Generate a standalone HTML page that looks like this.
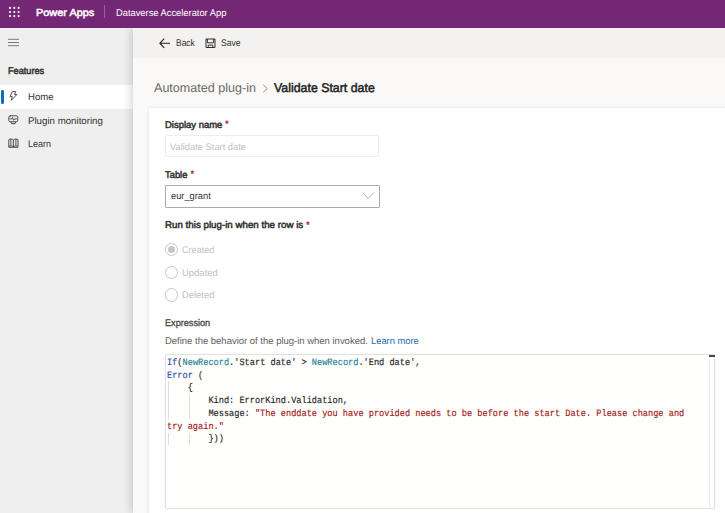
<!DOCTYPE html>
<html lang="en">
<head>
<meta charset="utf-8">
<title>Dataverse Accelerator App</title>
<style>
*{box-sizing:border-box;margin:0;padding:0}
html,body{text-rendering:geometricPrecision;width:725px;height:513px;overflow:hidden;background:#efefef;font-family:"Liberation Sans",sans-serif;color:#323130}
.abs{position:absolute}
.t{position:absolute;white-space:nowrap;line-height:1;transform-origin:0 50%}
.sb{-webkit-text-stroke:.5px currentColor}
.sl{-webkit-text-stroke:.3px currentColor}
.star{color:#a4262c;font-size:9.5px;-webkit-text-stroke:.25px #a4262c}
#hdr{left:0;top:0;width:725px;height:27.6px;background:#742774}
#main{left:132.7px;top:27.6px;width:593px;height:486px;background:#faf9f8;box-shadow:-1px 0 9px rgba(0,0,0,.2)}
#bar{left:132.7px;top:27.6px;width:593px;height:30px;background:#f3f2f1}
#card{left:148.6px;top:107.8px;width:580px;height:420px;background:#fff;border-radius:2px;box-shadow:0 0 3px rgba(0,0,0,.13)}
.radio{position:absolute;width:13.4px;height:13.4px;border:1px solid #c8c6c4;border-radius:50%;background:#fff}
.radio.on:after{content:"";position:absolute;left:2.2px;top:2.2px;width:7px;height:7px;border-radius:50%;background:#c8c6c4}
#ed{left:164.5px;top:353.8px;width:550.5px;height:155.2px;border:1px solid #e2e1e0;background:#fffffe;border-radius:2px;box-shadow:0 0 1px #dcdcdc}
#code{position:absolute;left:1.2px;top:2.35px;font-family:"Liberation Mono",monospace;font-size:9.7px;-webkit-text-stroke:.15px;line-height:12.67px;white-space:pre;color:#1e1e1e;transform-origin:0 0;transform:scaleX(.8897)}
.fn{color:#2f4f9f}.id{color:#267f99}.st{color:#a31515}
.g{position:absolute;width:1px;background:#dedede}
</style>
</head>
<body>

<!-- sidebar -->
<svg class="abs" style="left:8px;top:38px" width="12" height="9" viewBox="0 0 12 9" stroke="#7a7a7a" stroke-width="1"><path d="M0 1.3H11M0 4.5H11M0 7.7H11"/></svg>
<div class="abs" style="left:0;top:85px;width:132.7px;height:23.5px;background:#fff"></div>
<div class="abs" style="left:1.2px;top:89.6px;width:2.7px;height:14px;background:#0f6cbd;border-radius:1.3px"></div>
<svg class="abs" style="left:8.6px;top:91.4px" width="9" height="10" viewBox="0 0 9 10" fill="none" stroke="#3b3a39" stroke-width=".9" stroke-linejoin="round"><path d="M3.2 .6H6.6L5.5 3.5H7.9L2.3 9.3L3.3 5.6H1.1Z"/></svg>
<svg class="abs" style="left:8.2px;top:114.8px" width="11" height="10" viewBox="0 0 11 10" fill="none" stroke="#3b3a39" stroke-width=".9" stroke-linejoin="round" stroke-linecap="round"><rect x=".8" y=".8" width="9" height="6" rx="1.5"/><path d="M2 3.9H3.5L4.4 2.5L5.6 5.3L6.5 3.9H8.4"/><path d="M3 6.9L3.6 8.7H7L7.6 6.9"/></svg>
<svg class="abs" style="left:7.7px;top:137.9px" width="11" height="11" viewBox="0 0 11 11" fill="none" stroke="#3b3a39" stroke-width=".9" stroke-linejoin="round"><path d="M.8 1.7C2.2 .7 4.2 .8 5.4 1.8C6.6 .8 8.6 .7 10 1.7V9.3H.8ZM5.4 1.8V9.3M2.9 1.2V7.9M7.9 1.2V7.9"/><path d="M.8 8.1H10" stroke-width=".7"/></svg>

<div id="main" class="abs"></div>
<div id="bar" class="abs"></div>
<div id="hdr" class="abs">
  <svg class="abs" style="left:8px;top:6px" width="14" height="14" viewBox="0 0 14 14" fill="#fff">
    <circle cx="2" cy="1.9" r="1.05"/><circle cx="6.3" cy="1.9" r="1.05"/><circle cx="10.6" cy="1.9" r="1.05"/>
    <circle cx="2" cy="6" r="1.05"/><circle cx="6.3" cy="6" r="1.05"/><circle cx="10.6" cy="6" r="1.05"/>
    <circle cx="2" cy="10.1" r="1.05"/><circle cx="6.3" cy="10.1" r="1.05"/><circle cx="10.6" cy="10.1" r="1.05"/>
  </svg>
  <div class="abs" style="left:104px;top:4.8px;width:1px;height:13.2px;background:#99649a"></div>
</div>

<svg class="abs" style="left:159px;top:37.6px" width="12" height="11" viewBox="0 0 12 11" fill="none" stroke="#242424" stroke-width="1.15"><path d="M5.2 .6L.9 5.2L5.2 9.8M1 5.2H11"/></svg>
<svg class="abs" style="left:205.3px;top:37.5px" width="11" height="11" viewBox="0 0 11 11" fill="none" stroke="#323130" stroke-width="1"><path d="M1 1H10V9.5H1ZM2.4 1V4.8H8.6V1M3.2 9.5V7.1H7.8V9.5"/></svg>

<svg class="abs" style="left:262px;top:83.5px" width="7" height="10" viewBox="0 0 7 10" fill="none" stroke="#8a8886" stroke-width=".9"><path d="M1.2 .7L5.2 4.6L1.2 8.5"/></svg>

<div id="card" class="abs"></div>

<div class="abs" style="left:164.6px;top:135.4px;width:214px;height:21.6px;border:1px solid #efeeed;background:#fff;border-radius:2px"></div>
<div class="abs" style="left:165px;top:185px;width:215px;height:23px;border:1px solid #adabaa;background:#fff;border-radius:1px"></div>
<svg class="abs" style="left:362px;top:192.2px" width="13" height="8" viewBox="0 0 13 8" fill="none" stroke="#b3b1af" stroke-width="1"><path d="M.6 .7L6.2 6.5L11.8 .7"/></svg>

<div class="radio on" style="left:164.6px;top:242.8px"></div>
<div class="radio" style="left:164.6px;top:265.5px"></div>
<div class="radio" style="left:164.6px;top:288.4px"></div>

<div id="ed" class="abs">
<div class="g" style="left:2.9px;top:26.5px;height:38px"></div>
<div class="g" style="left:23.9px;top:39.2px;height:25.3px"></div>
<div class="g" style="left:2.9px;top:78px;height:12px"></div>
<div class="g" style="left:23.9px;top:78px;height:12px"></div>
<div id="code"><span class="fn">If</span>(<span class="id">NewRecord</span>.'Start date' &gt; <span class="id">NewRecord</span>.'End date',
<span class="fn">Error</span> (
    {
        Kind: ErrorKind.Validation,
        Message: <span class="st">"The enddate you have provided needs to be before the start Date. Please change and</span>
<span class="st">try again."</span>
        }))</div>
<div class="abs" style="right:0;top:0;width:5.4px;height:152.7px;border-left:1px solid #ebebeb"></div>
<div class="abs" style="right:-.6px;top:.2px;width:5.4px;height:1.6px;background:#4a4a4a"></div>
</div>
<span id="pa" class="t sb" style="left:36.20px;top:9.18px;font-size:10.3px;color:#fff;transform:scaleX(1.0609)">Power Apps</span>
<span id="dv" class="t" style="left:115.80px;top:8.69px;font-size:9.7px;color:#fff;transform:scaleX(0.9625)">Dataverse Accelerator App</span>
<span id="ft" class="t sb" style="left:8.00px;top:67.19px;font-size:9.7px;color:#323130;transform:scaleX(0.9468)">Features</span>
<span id="hm" class="t" style="left:28.10px;top:92.99px;font-size:9.7px;color:#323130;transform:scaleX(0.9867)">Home</span>
<span id="pm" class="t" style="left:28.10px;top:117.39px;font-size:9.7px;color:#323130;transform:scaleX(1.0005)">Plugin monitoring</span>
<span id="ln" class="t" style="left:28.10px;top:139.79px;font-size:9.7px;color:#323130;transform:scaleX(0.9241)">Learn</span>
<span id="bk" class="t" style="left:175.60px;top:39.19px;font-size:9.7px;color:#323130;transform:scaleX(0.8725)">Back</span>
<span id="sv" class="t" style="left:221.20px;top:39.19px;font-size:9.7px;color:#323130;transform:scaleX(0.8871)">Save</span>
<span id="ap" class="t" style="left:153.80px;top:81.73px;font-size:12.6px;color:#6b6967;transform:scaleX(0.9979)">Automated plug-in</span>
<span id="vs" class="t sb" style="left:274.10px;top:81.73px;font-size:12.6px;color:#242424;transform:scaleX(0.9816)">Validate Start date</span>
<span id="dn" class="t sb" style="left:164.70px;top:121.19px;font-size:9.7px;color:#323130;transform:scaleX(0.9761)">Display name</span>
<span id="ph" class="t" style="left:170.40px;top:142.76px;font-size:9.5px;color:#c2c0be;transform:scaleX(0.9810)">Validate Start date</span>
<span id="tb" class="t sb" style="left:164.60px;top:170.79px;font-size:9.7px;color:#323130;transform:scaleX(0.9667)">Table</span>
<span id="eg" class="t" style="left:171.20px;top:192.19px;font-size:9.7px;color:#323130;transform:scaleX(0.9594)">eur_grant</span>
<span id="rn" class="t sb" style="left:164.60px;top:221.39px;font-size:9.7px;color:#323130;transform:scaleX(1.0065)">Run this plug-in when the row is</span>
<span id="cr" class="t" style="left:182.00px;top:245.79px;font-size:9.7px;color:#c4c2c0;transform:scaleX(0.9400)">Created</span>
<span id="up" class="t" style="left:182.00px;top:269.39px;font-size:9.7px;color:#c4c2c0;transform:scaleX(0.9771)">Updated</span>
<span id="de" class="t" style="left:182.00px;top:291.19px;font-size:9.7px;color:#c4c2c0;transform:scaleX(0.9699)">Deleted</span>
<span id="ex" class="t sl" style="left:164.60px;top:319.19px;font-size:9.7px;color:#484644;transform:scaleX(0.9429)">Expression</span>
<span id="df" class="t" style="left:164.60px;top:336.79px;font-size:9.7px;color:#605e5c;transform:scaleX(0.9781)">Define the behavior of the plug-in when invoked.</span>
<span id="lm" class="t" style="left:370.60px;top:336.79px;font-size:9.7px;color:#1f6cb0;transform:scaleX(0.9647)">Learn more</span>
<span class="t star" style="left:225px;top:120.2px">*</span>
<span class="t star" style="left:190.4px;top:169.8px">*</span>
<span class="t star" style="left:306.1px;top:220.6px">*</span>
</body>
</html>
